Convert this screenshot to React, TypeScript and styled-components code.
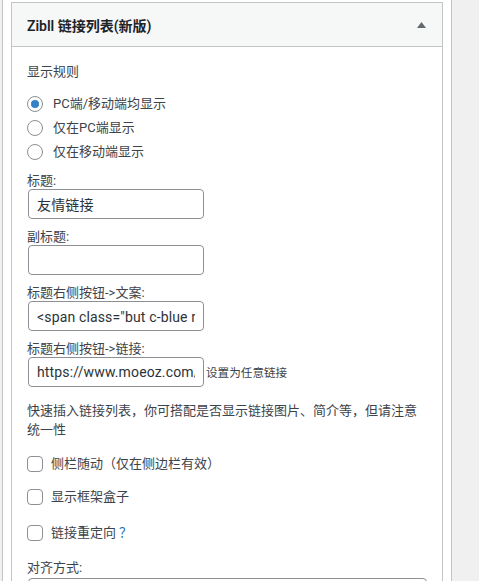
import React from "react"
import styled, { createGlobalStyle } from "styled-components"

const GlobalStyle = createGlobalStyle`
  html, body {
    margin: 0;
    overflow: hidden;
  }
  body {
    background: #f0f0f1;
    font-family: Roboto, "Noto Sans CJK SC", sans-serif;
    font-size: 13px;
    color: #3c434a;
  }
`

const Sidebar = styled.div`
  box-sizing: border-box;
  margin-left: 2px;
  width: 450px;
  height: 581px;
  overflow: hidden;
  padding: 2px 8px 0;
  background: #fff;
  border-left: 1px solid #c3c4c7;
  border-right: 1px solid #c3c4c7;
`

const Panel = styled.div`
  border: 1px solid #c3c4c7;
  background: #fff;
`

const PanelHead = styled.div`
  display: flex;
  align-items: center;
  justify-content: space-between;
  height: 43px;
  padding: 0 16px 0 15px;
  background: #f6f7f7;
  border-bottom: 1px solid #c3c4c7;
`

const PanelTitle = styled.h3`
  margin: 0;
  font-size: 14px;
  font-weight: 600;
  color: #1d2327;
`

const PanelBody = styled.div`
  padding: 0 15px;
`

const SectionTitle = styled.div`
  margin-top: 15px;
  line-height: 19.5px;
`

const RadioList = styled.div`
  margin-top: 10px;
  display: flex;
  flex-direction: column;
`

const OptionRow = styled.label<{ $gap?: number }>`
  display: flex;
  align-items: center;
  gap: ${(p) => p.$gap ?? 10}px;
  height: 24px;
  line-height: 24px;
`

const Radio = styled.input.attrs({ type: "radio" })`
  appearance: none;
  margin: 0;
  width: 16px;
  height: 16px;
  border: 1px solid #8c8f94;
  border-radius: 50%;
  background: #fff;
  display: grid;
  place-items: center;
  box-sizing: border-box;
  &:checked::before {
    content: "";
    width: 8px;
    height: 8px;
    border-radius: 50%;
    background: #3582c4;
  }
`

const Fields = styled.div`
  margin-top: 9px;
  display: flex;
  flex-direction: column;
  gap: 10px;
`

const Field = styled.div<{ $top?: number }>`
  margin-top: ${(p) => p.$top ?? 0}px;
`

const FieldLabel = styled.label`
  display: block;
  height: 16px;
  line-height: 16px;
`

const InputLine = styled.div`
  display: flex;
  align-items: center;
  gap: 2px;
`

const TextInput = styled.input`
  box-sizing: border-box;
  width: 176px;
  height: 30px;
  margin: 0 0 0 1px;
  padding: 0 8px;
  border: 1px solid #8c8f94;
  border-radius: 4px;
  background: #fff;
  font-family: Roboto, "Noto Sans CJK SC", sans-serif;
  font-size: 14px;
  letter-spacing: 0.15px;
  color: #2c3338;
  outline: none;
`

const Select = styled.div`
  box-sizing: border-box;
  width: calc(100% - 1px);
  height: 30px;
  margin: 2px 0 0 1px;
  border: 1px solid #8c8f94;
  border-radius: 4px;
  background: #fff;
`

const Hint = styled.span`
  font-size: 11.6px;
  white-space: nowrap;
`

const Note = styled.p`
  margin: 14px 0 0;
  line-height: 19.5px;
`

const CheckRow = styled(OptionRow)<{ $top: number }>`
  margin-top: ${(p) => p.$top}px;
  height: 20px;
  line-height: 20px;
`

const Checkbox = styled.input.attrs({ type: "checkbox" })`
  appearance: none;
  margin: 0;
  width: 16px;
  height: 16px;
  box-sizing: border-box;
  border: 1px solid #8c8f94;
  border-radius: 4px;
  background: #fff;
`

const Help = styled.span`
  margin-left: 3px;
  color: #2271b1;
`

const radios = ["PC端/移动端均显示", "仅在PC端显示", "仅在移动端显示"]

const App = () => {
  return (
    <>
      <GlobalStyle />
      <Sidebar>
        <Panel>
          <PanelHead>
            <PanelTitle>Zibll 链接列表(新版)</PanelTitle>
            <svg width="9" height="6" viewBox="0 0 9 6">
              <polygon points="4.5,0 9,6 0,6" fill="#646970" />
            </svg>
          </PanelHead>
          <PanelBody>
            <SectionTitle>显示规则</SectionTitle>
            <RadioList>
              {radios.map((r, i) => (
                <OptionRow key={r}>
                  <Radio name="show" defaultChecked={i === 0} />
                  {r}
                </OptionRow>
              ))}
            </RadioList>
            <Fields>
              <Field>
                <FieldLabel>标题:</FieldLabel>
                <TextInput defaultValue="友情链接" />
              </Field>
              <Field>
                <FieldLabel>副标题:</FieldLabel>
                <TextInput defaultValue="" />
              </Field>
              <Field>
                <FieldLabel>标题右侧按钮-&gt;文案:</FieldLabel>
                <TextInput defaultValue={'<span class="but c-blue radius">更多</span>'} />
              </Field>
              <Field>
                <FieldLabel>标题右侧按钮-&gt;链接:</FieldLabel>
                <InputLine>
                  <TextInput defaultValue="https://www.moeoz.com/links" />
                  <Hint>设置为任意链接</Hint>
                </InputLine>
              </Field>
            </Fields>
            <Note>快速插入链接列表，你可搭配是否显示链接图片、简介等，但请注意统一性</Note>
            <CheckRow $top={14} $gap={8}>
              <Checkbox />
              侧栏随动（仅在侧边栏有效）
            </CheckRow>
            <CheckRow $top={13} $gap={8}>
              <Checkbox />
              显示框架盒子
            </CheckRow>
            <CheckRow $top={16} $gap={8}>
              <Checkbox />
              <span>
                链接重定向<Help>？</Help>
              </span>
            </CheckRow>
            <Field $top={17}>
              <FieldLabel>对齐方式:</FieldLabel>
              <Select />
            </Field>
          </PanelBody>
        </Panel>
      </Sidebar>
    </>
  )
}

export default App
